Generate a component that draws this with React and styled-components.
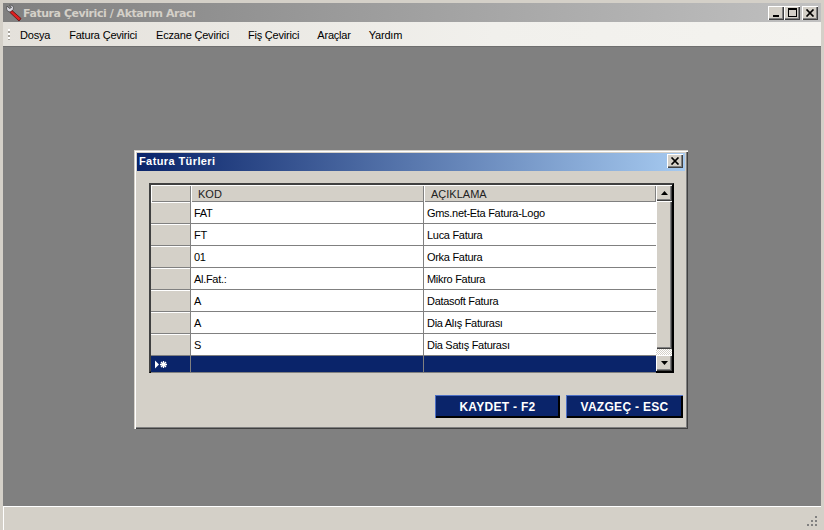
import React from 'react';
import styled, { createGlobalStyle } from 'styled-components';

const Global = createGlobalStyle`
    html, body { margin: 0; padding: 0; background: #d4d0c8; }
    body { font-family: "Liberation Sans", Arial, sans-serif; font-size: 11px; color: #000; }
`;

const Frame = styled.div`
    width: 824px;
    height: 530px;
    box-sizing: border-box;
    background: #d4d0c8;
    border: 1px solid #d4d0c8;
    border-width: 3px 3px 0 3px;
    box-shadow: inset 1px 1px 0 #fff;
    display: flex;
    flex-direction: column;
    overflow: hidden;
`;

const TitleBar = styled.div`
    height: 19px;
    flex: none;
    display: flex;
    align-items: center;
    padding: 0 3px 0 2px;
    background: linear-gradient(90deg, #808080 0%, #c0c0c0 100%);
`;

const AppIcon = styled.svg`
    width: 17px;
    height: 18px;
    flex: none;
    margin-right: 1px;
`;

const TitleText = styled.span`
    flex: 1;
    padding-top: 1px;
    font-family: "DejaVu Sans", Verdana, sans-serif;
    font-weight: bold;
    font-size: 11px;
    letter-spacing: -0.45px;
    color: #d4d0c8;
    white-space: nowrap;
`;

const CaptionButton = styled.button`
    width: 16px;
    height: 14px;
    padding: 0;
    margin-left: ${p => p.$gap || 0}px;
    background: #d4d0c8;
    border: none;
    box-shadow: inset 1px 1px 0 #fff, inset -1px -1px 0 #404040, inset -2px -2px 0 #808080;
    display: flex;
    align-items: center;
    justify-content: center;
`;

const Menu = styled.div`
    height: 24px;
    flex: none;
    box-sizing: border-box;
    padding-top: 1px;
    display: flex;
    align-items: center;
    background: linear-gradient(90deg, #e4e1db 0%, #f1f0ec 60%, #f4f3ef 100%);
`;

const Grip = styled.div`
    width: 2px;
    height: 11px;
    margin: 0 10px 0 5px;
    background: repeating-linear-gradient(180deg, #fff 0 2px, #a8a49c 2px 4px);
`;

const MenuItem = styled.span`
    margin-right: ${p => p.$gap}px;
    font-size: 11px;
    letter-spacing: -0.2px;
    white-space: nowrap;
`;

const Client = styled.div`
    flex: 1;
    min-height: 0;
    background: #808080;
    border-top: 1px solid #6f6f6f;
    display: flex;
    justify-content: center;
    align-items: flex-start;
    padding: 103px 0 0 0;
`;

const Status = styled.div`
    height: 24px;
    flex: none;
    box-sizing: border-box;
    border-top: 1px solid #fff;
    display: flex;
    justify-content: flex-end;
    align-items: flex-end;
    padding: 0 3px 3px 0;
`;

const Dialog = styled.div`
    width: 554px;
    height: 279px;
    box-sizing: border-box;
    flex: none;
    margin-left: -2px;
    background: #d4d0c8;
    padding: 3px;
    box-shadow: inset 1px 1px 0 #d4d0c8, inset 2px 2px 0 #fff, inset -1px -1px 0 #404040, inset -2px -2px 0 #808080;
    display: flex;
    flex-direction: column;
`;

const DialogTitle = styled.div`
    height: 18px;
    flex: none;
    display: flex;
    align-items: center;
    justify-content: space-between;
    padding: 0 2px 2px 2px;
    box-sizing: border-box;
    background: linear-gradient(90deg, #0a246a 0%, #a6caf0 100%);
    font-weight: bold;
    font-size: 11px;
    letter-spacing: 0.4px;
    color: #fff;
`;

const DialogBody = styled.div`
    flex: 1;
    display: flex;
    flex-direction: column;
    padding: 12px 12px 8px 12px;
`;

const Table = styled.div`
    width: 525px;
    height: 190px;
    box-sizing: border-box;
    background: #d4d0c8;
    border: 2px solid;
    border-color: #404040 #000 #000 #404040;
    display: flex;
`;

const Rows = styled.div`
    flex: 1;
    display: flex;
    flex-direction: column;
`;

const Row = styled.div`
    display: grid;
    grid-template-columns: 40px 233px 232px;
    height: ${p => p.$h}px;
    flex: none;
`;

const Selector = styled.div`
    background: ${p => (p.$active ? '#0a246a' : '#d4d0c8')};
    box-shadow: inset 0 1px 0 ${p => (p.$active ? '#0a246a' : '#fff')}, inset 0 -1px 0 #808080;
    border-right: 1px solid #808080;
    display: flex;
    align-items: center;
    padding-left: 4px;
    color: #fff;
`;

const HeadCell = styled.div`
    background: #d4d0c8;
    box-shadow: inset 1px 1px 0 #fff, inset -1px -1px 0 #808080;
    display: flex;
    align-items: center;
    padding-left: 7px;
    font-size: 11px;
    color: #222;
`;

const Cell = styled.div`
    background: ${p => (p.$active ? '#0a246a' : '#fff')};
    border-right: 1px solid #808080;
    border-bottom: 1px solid #808080;
    display: flex;
    align-items: center;
    padding-left: 3px;
    font-size: 11px;
    letter-spacing: -0.3px;
    white-space: nowrap;
    &:last-child { border-right: none; }
`;

const Scroll = styled.div`
    width: 16px;
    flex: none;
    display: flex;
    flex-direction: column;
    background: repeating-conic-gradient(#d4d0c8 0 25%, #fff 0 50%) 0 0 / 2px 2px;
`;

const ScrollButton = styled.div`
    height: 16px;
    flex: none;
    background: #d4d0c8;
    box-shadow: inset 1px 1px 0 #fff, inset -1px -1px 0 #404040, inset -2px -2px 0 #808080;
    display: flex;
    align-items: center;
    justify-content: center;
`;

const Thumb = styled.div`
    height: 148px;
    flex: none;
    background: #d4d0c8;
    box-shadow: inset 1px 1px 0 #fff, inset -1px -1px 0 #404040, inset -2px -2px 0 #808080;
`;

const ScrollTrack = styled.div`
    flex: 1;
`;

const Actions = styled.div`
    display: flex;
    justify-content: flex-end;
    gap: 6px;
    margin-top: auto;
    margin-right: -10px;
`;

const ActionButton = styled.button`
    height: 23px;
    width: ${p => p.$w}px;
    padding: 0;
    background: #0a246a;
    color: #fff;
    border: none;
    box-shadow: inset 1px 1px 0 #4d6fc4, inset -1px -1px 0 #000, inset -2px -2px 0 #000;
    font-family: "Liberation Sans", Arial, sans-serif;
    font-weight: bold;
    font-size: 12px;
    letter-spacing: 0.3px;
`;

const rows = [
    ['FAT', 'Gms.net-Eta Fatura-Logo'],
    ['FT', 'Luca Fatura'],
    ['01', 'Orka Fatura'],
    ['Al.Fat.:', 'Mikro Fatura'],
    ['A', 'Datasoft Fatura'],
    ['A', 'Dia Alış Faturası'],
    ['S', 'Dia Satış Faturası'],
];

const CloseGlyph = () => (
    <svg width="10" height="8" viewBox="0 0 10 8">
        <path d="M1.500 0.500L8.500 7.500M8.500 0.500L1.500 7.500" stroke="#000" strokeWidth="1.7" fill="none" />
    </svg>
);

const App = () => (
    <Frame>
        <Global />
        <TitleBar>
            <AppIcon viewBox="0 0 17 18">
                <path d="M2 2 L4.500 4.500 L6.500 3.500 L4.500 1 Q8 0.500 8.500 3.500 Q8.500 5.500 7.500 6.500 L5.500 8 Q2 8 1.500 5 Z" fill="#d8d8e0" stroke="#444" strokeWidth="0.7" />
                <path d="M7 6.500 L16 14.500 L14 17 L5 8.500 Z" fill="#e02020" stroke="#5a0c0c" strokeWidth="0.8" />
            </AppIcon>
            <TitleText>Fatura Çevirici / Aktarım Aracı</TitleText>
            <CaptionButton>
                <svg width="8" height="9" viewBox="0 0 8 9"><rect x="1" y="7" width="6" height="2" fill="#000" /></svg>
            </CaptionButton>
            <CaptionButton>
                <svg width="9" height="9" viewBox="0 0 9 9"><path d="M0 0h9v9H0z M1 2v6h7V2z" fillRule="evenodd" fill="#000" /></svg>
            </CaptionButton>
            <CaptionButton $gap={2}><CloseGlyph /></CaptionButton>
        </TitleBar>
        <Menu>
            <Grip />
            <MenuItem $gap={19}>Dosya</MenuItem>
            <MenuItem $gap={19}>Fatura Çevirici</MenuItem>
            <MenuItem $gap={19}>Eczane Çevirici</MenuItem>
            <MenuItem $gap={18}>Fiş Çevirici</MenuItem>
            <MenuItem $gap={18}>Araçlar</MenuItem>
            <MenuItem $gap={18}>Yardım</MenuItem>
        </Menu>
        <Client>
            <Dialog>
                <DialogTitle>
                    <span>Fatura Türleri</span>
                    <CaptionButton><CloseGlyph /></CaptionButton>
                </DialogTitle>
                <DialogBody>
                    <Table>
                        <Rows>
                            <Row $h={17}>
                                <HeadCell />
                                <HeadCell>KOD</HeadCell>
                                <HeadCell>AÇIKLAMA</HeadCell>
                            </Row>
                            {rows.map(([code, label], i) => (
                                <Row $h={22} key={i}>
                                    <Selector />
                                    <Cell>{code}</Cell>
                                    <Cell>{label}</Cell>
                                </Row>
                            ))}
                            <Row $h={17}>
                                <Selector $active>
                                    <svg width="13" height="9" viewBox="0 0 13 9">
                                        <path d="M0 0.500 L4 4.500 L0 8.500 Z" fill="#fff" />
                                        <path d="M8.500 1v7M5 4.500h7M6 2l5 5M11 2l-5 5" stroke="#fff" strokeWidth="1.3" />
                                    </svg>
                                </Selector>
                                <Cell $active />
                                <Cell $active />
                            </Row>
                        </Rows>
                        <Scroll>
                            <ScrollButton>
                                <svg width="7" height="4" viewBox="0 0 7 4"><path d="M3.500 0L7 4H0z" fill="#000" /></svg>
                            </ScrollButton>
                            <Thumb />
                            <ScrollTrack />
                            <ScrollButton>
                                <svg width="7" height="4" viewBox="0 0 7 4"><path d="M0 0h7L3.500 4z" fill="#000" /></svg>
                            </ScrollButton>
                        </Scroll>
                    </Table>
                    <Actions>
                        <ActionButton $w={125}>KAYDET - F2</ActionButton>
                        <ActionButton $w={117}>VAZGEÇ - ESC</ActionButton>
                    </Actions>
                </DialogBody>
            </Dialog>
        </Client>
        <Status>
            <svg width="11" height="11" viewBox="0 0 11 11" fill="#808080">
                <rect x="8" y="0" width="2" height="2" />
                <rect x="4" y="4" width="2" height="2" />
                <rect x="8" y="4" width="2" height="2" />
                <rect x="0" y="8" width="2" height="2" />
                <rect x="4" y="8" width="2" height="2" />
                <rect x="8" y="8" width="2" height="2" />
            </svg>
        </Status>
    </Frame>
);

export default App;
